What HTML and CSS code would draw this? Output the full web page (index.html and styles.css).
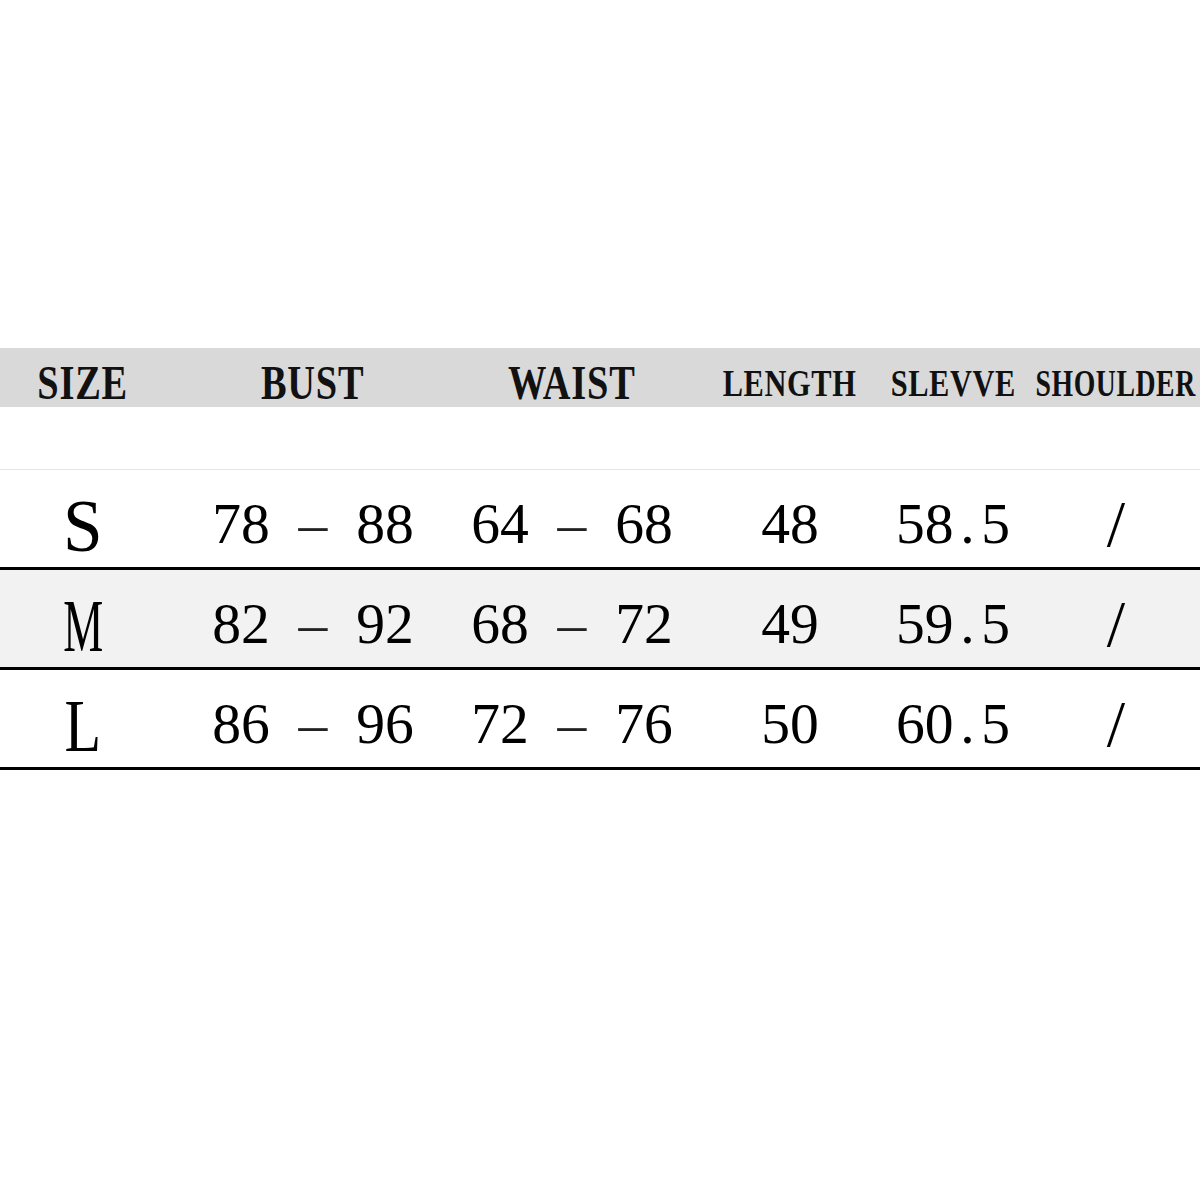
FILE: index.html
```html
<!DOCTYPE html>
<html>
<head>
<meta charset="utf-8">
<link rel="stylesheet" href="styles.css">
</head>
<body>
<div class="chart">
  <div class="grid head">
    <div class="cell"><span class="h h-lg">SIZE</span></div>
    <div class="cell"><span class="h h-lg">BUST</span></div>
    <div class="cell"><span class="h h-lg">WAIST</span></div>
    <div class="cell"><span class="h h-sm">LENGTH</span></div>
    <div class="cell"><span class="h h-sm">SLEVVE</span></div>
    <div class="cell"><span class="h h-sm h-tight">SHOULDER</span></div>
  </div>
  <div class="spacer"></div>
  <div class="grid row">
    <div class="cell size"><span class="letter round">S</span></div>
    <div class="cell num">78<span class="dash">–</span>88</div>
    <div class="cell num">64<span class="dash">–</span>68</div>
    <div class="cell num">48</div>
    <div class="cell num">58<span class="dot">.</span>5</div>
    <div class="cell slash">/</div>
  </div>
  <div class="grid row alt">
    <div class="cell size"><span class="letter wide">M</span></div>
    <div class="cell num">82<span class="dash">–</span>92</div>
    <div class="cell num">68<span class="dash">–</span>72</div>
    <div class="cell num">49</div>
    <div class="cell num">59<span class="dot">.</span>5</div>
    <div class="cell slash">/</div>
  </div>
  <div class="grid row">
    <div class="cell size"><span class="letter">L</span></div>
    <div class="cell num">86<span class="dash">–</span>96</div>
    <div class="cell num">72<span class="dash">–</span>76</div>
    <div class="cell num">50</div>
    <div class="cell num">60<span class="dot">.</span>5</div>
    <div class="cell slash">/</div>
  </div>
</div>
</body>
</html>
```
FILE: styles.css
```css
html, body {
  margin: 0;
  padding: 0;
  background: #ffffff;
  overflow: hidden;
}

body {
  font-family: "Liberation Serif", "Times New Roman", serif;
  color: #000;
}

.chart {
  margin-top: 348px;
  width: 1200px;
}

.grid {
  display: grid;
  grid-template-columns: 166px 294px 224px 212px 114px 212px;
  width: 1200px;
}

.cell {
  display: flex;
  justify-content: center;
  white-space: nowrap;
}

/* header band */
.head {
  background: #d9d9d9;
  height: 59px;
}

.h {
  display: inline-block;
  font-weight: bold;
  transform: scaleX(0.8);
  color: #111;
}

.h-lg {
  font-size: 48px;
  line-height: 48px;
  padding-top: 11px;
  letter-spacing: 0.02em;
}

.h-sm {
  font-size: 38px;
  line-height: 47px;
  padding-top: 12px;
  letter-spacing: 0.02em;
}

.h-tight {
  transform: scaleX(0.73);
}

.spacer {
  height: 62px;
  border-bottom: 1px solid #e4e4e4;
}

/* data rows */
.row {
  height: 97px;
  border-bottom: 3px solid #000;
}

.row.alt {
  background: #f2f2f2;
}

.num {
  font-size: 57.6px;
  line-height: 87px;
  padding-top: 10px;
}

.dash {
  display: inline-block;
  width: 1.5em;
  text-align: center;
  color: #222;
}

.dot {
  display: inline-block;
  width: 0.5em;
  text-align: center;
}

.slash {
  font-size: 66px;
  line-height: 86px;
  padding-top: 11px;
}

.size {
  font-size: 75px;
  line-height: 83px;
  padding-top: 14px;
}

.letter {
  display: inline-block;
  transform: scaleX(0.8);
}

.letter.round {
  transform: scaleX(0.95);
}

.letter.wide {
  transform: scaleX(0.6);
}
```
